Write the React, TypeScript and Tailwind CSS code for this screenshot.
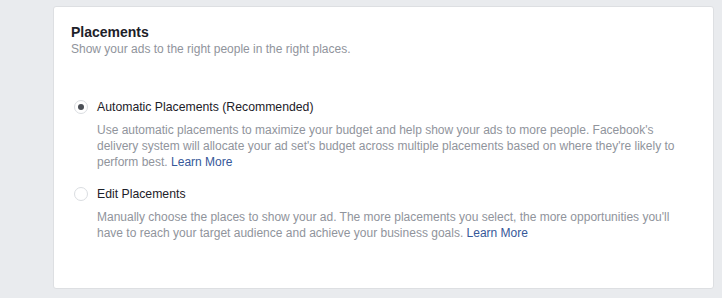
import React from "react";

const options = [
  {
    label: "Automatic Placements (Recommended)",
    checked: true,
    text: "Use automatic placements to maximize your budget and help show your ads to more people. Facebook's delivery system will allocate your ad set's budget across multiple placements based on where they're likely to perform best.",
  },
  {
    label: "Edit Placements",
    checked: false,
    text: "Manually choose the places to show your ad. The more placements you select, the more opportunities you'll have to reach your target audience and achieve your business goals.",
  },
];

function Radio({ checked }: { checked: boolean }) {
  return (
    <span className="w-[14px] h-[14px] rounded-full border border-[#dadde1] bg-white flex items-center justify-center shrink-0">
      {checked && <span className="w-[6px] h-[6px] rounded-full bg-[#4b4f56]" />}
    </span>
  );
}

export default function App() {
  return (
    <div
      className="min-h-screen bg-[#e9ebee] pl-[53px] pt-[6px]"
      style={{ fontFamily: '"Liberation Sans", Arial, sans-serif' }}
    >
      <div className="w-[661px] h-[283px] bg-white border border-[#dddfe2] rounded-[3px] pl-[17px] pt-[16px]">
        {/* Header */}
        <h2 className="text-[14px] leading-[18px] font-bold text-[#1d2129]">Placements</h2>
        <p className="text-[12px] leading-[16px] text-[#90949c]">
          Show your ads to the right people in the right places.
        </p>

        {/* Options */}
        <div className="mt-[42px] flex flex-col gap-[16px]">
          {options.map((opt) => (
            <div key={opt.label}>
              <div className="flex items-center h-[16px]">
                <span className="w-[26px] pl-[3px] flex items-center">
                  <Radio checked={opt.checked} />
                </span>
                <span className="text-[12.25px] leading-[16px] text-[#1d2129]">{opt.label}</span>
              </div>
              <p className="mt-[7px] ml-[26px] w-[594px] text-[12px] leading-[16px] text-[#90949c]">
                {opt.text} <a className="text-[#365899]">Learn More</a>
              </p>
            </div>
          ))}
        </div>
      </div>
    </div>
  );
}
